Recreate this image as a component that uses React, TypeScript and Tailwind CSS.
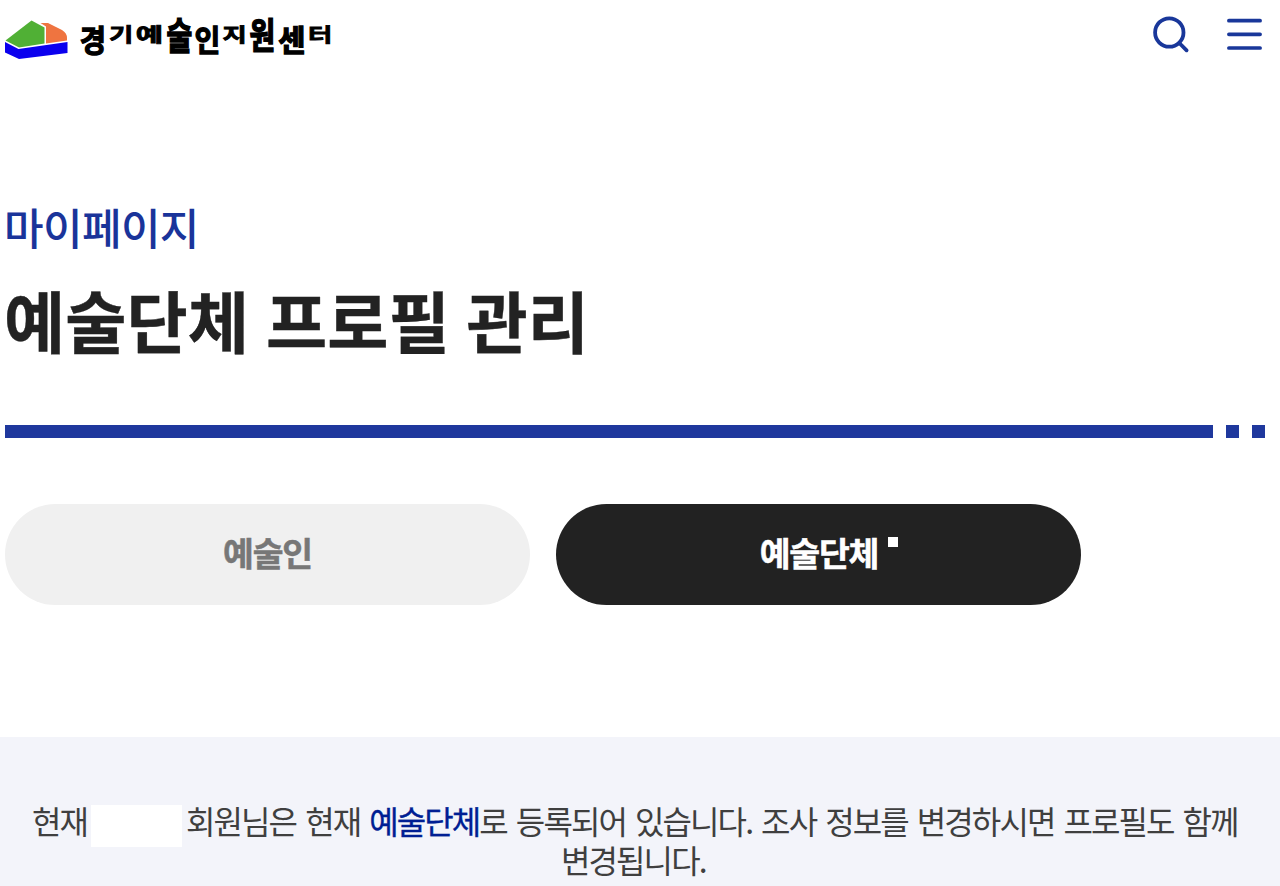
const logoGlyphs = [
  { char: '경', style: 'w-[30px] scale-x-[1.02] scale-y-[1.1] -translate-y-[1px]' },
  { char: '기', style: 'w-[26px] scale-x-[0.94] scale-y-[0.7] -translate-y-[6px]' },
  { char: '예', style: 'w-[31px] scale-x-[1.06] scale-y-[0.7] -translate-y-[6px]' },
  { char: '술', style: 'w-[29px] scale-y-[1.32] -translate-y-[6px]' },
  { char: '인', style: 'w-[27px] scale-y-[1.05] -translate-y-[2px]' },
  { char: '지', style: 'w-[27px] scale-x-[0.94] scale-y-[0.7] -translate-y-[6px]' },
  { char: '원', style: 'w-[29px] scale-y-[1.28] -translate-y-[6px]' },
  { char: '센', style: 'w-[30px] scale-x-[1.06] scale-y-[1.05] -translate-y-[2px]' },
  { char: '터', style: 'w-[26px] scale-x-[0.94] scale-y-[0.7] -translate-y-[6px]' },
];

function Header() {
  return (
    <header className="flex h-[70px] items-start justify-between pl-[5px] pr-[18px] pt-[14px]">
      <div className="flex">
        <svg className="mt-[6px] h-[40px] w-[63px]" viewBox="0 0 63 40" aria-hidden="true">
          <path d="M0.5 20.5 26.5 0.5 39.5 7.5V23.5L14 27.5Z" fill="#50b035" />
          <path d="M35.5 3H43L57 10Q62 13 62 18V20.5L41 23.5V6.5Z" fill="#ef7440" />
          <path d="M0 22 13.5 29 62.5 22V33L14 39 0 32.5Z" fill="#0b00ee" />
        </svg>
        <div className="mt-[6px] ml-[10px] flex text-[28px] leading-[40px] font-bold text-black [-webkit-text-stroke:1.2px_#000]">
          {logoGlyphs.map((g) => (
            <span key={g.char} className={'inline-block text-center ' + g.style}>{g.char}</span>
          ))}
        </div>
      </div>
      <div className="flex">
        <svg className="h-[42px] w-[42px]" viewBox="0 0 42 42" fill="none" stroke="#19379a" strokeWidth="3.8" strokeLinecap="round">
          <circle cx="20.3" cy="18.5" r="14.2" />
          <path d="M30.3 29 37.6 36.3" />
        </svg>
        <svg className="ml-[36px] h-[42px] w-[35px]" viewBox="0 0 35 42" stroke="#19379a" strokeWidth="3.7" strokeLinecap="round">
          <path d="M1.9 6.7H33.1M1.9 20.3H33.1M1.9 34H33.1" />
        </svg>
      </div>
    </header>
  );
}

export default function App() {
  return (
    <div className="flex h-[886px] w-full flex-col overflow-hidden bg-white font-['Noto_Sans_CJK_KR',sans-serif]">
      <Header />
      <main className="flex grow flex-col">
        <p className="mt-[125px] ml-[4px] h-[62px] text-[43px] leading-[62px] font-medium tracking-[-0.6px] whitespace-nowrap text-[#1a349a]">마이페이지</p>
        <h1 className="mt-[16px] ml-[4px] h-[92px] text-[66.5px] leading-[92px] font-bold tracking-[0.1px] [word-spacing:1.6px] whitespace-nowrap text-[#222] [-webkit-text-stroke:0.4px_#222]">예술단체 프로필 관리</h1>
        <div className="mt-[60px] ml-[5px] flex h-[13px] gap-[13px]">
          <div className="w-[1208px] bg-[#1f389d]" />
          <div className="w-[13px] bg-[#1f389d]" />
          <div className="w-[13px] bg-[#1f389d]" />
        </div>
        <nav className="mt-[66px] ml-[5px] flex h-[101px] gap-[26px] text-[33.5px] font-bold tracking-[-1.2px]">
          <button className="flex w-[525px] items-center justify-center rounded-full bg-[#f0f0f0] pb-[4px] text-[#777] [-webkit-text-stroke:0.5px_#777]">
            <span>예술인</span>
          </button>
          <button className="flex w-[525px] items-center justify-center rounded-full bg-[#222] pb-[4px] text-white [-webkit-text-stroke:0.5px_#fff]">
            <span className="ml-[21px]">예술단체</span>
            <span className="mb-[22px] ml-[10px] h-[10px] w-[10px] bg-white" />
          </button>
        </nav>
        <section className="mt-[132px] grow bg-[#f3f4fa] pt-[64px] text-[32px] leading-[39px] tracking-[-1.9px] [word-spacing:3.7px] text-[#3f3f3f]">
          <p className="ml-[32px] flex h-[39px] whitespace-nowrap">
            <span className="w-[55px]">현재</span>
            <span className="mt-[4px] mr-[4px] ml-[4px] h-[42px] w-[91px] shrink-0 bg-white" />
            <span>
              회원님은 현재 <span className="text-[#001e93] [-webkit-text-stroke:0.35px_#001e93]">예술단체</span>로 등록되어 있습니다. 조사 정보를 변경하시면 프로필도 함께
            </span>
          </p>
          <p className="ml-[561px] h-[39px] whitespace-nowrap">변경됩니다.</p>
        </section>
      </main>
    </div>
  );
}
